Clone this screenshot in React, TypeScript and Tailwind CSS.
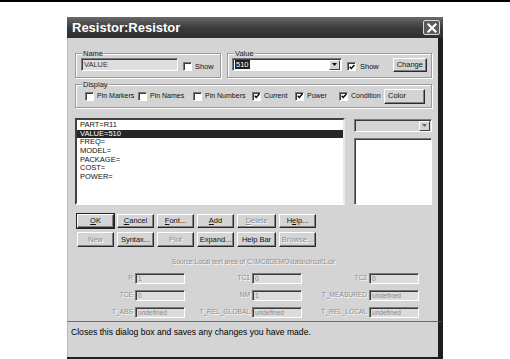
import { ReactNode } from "react";
import clsx from "clsx";

const LIST = ["PART=R11", "VALUE=510", "FREQ=", "MODEL=", "PACKAGE=", "COST=", "POWER="];

const FIELDS: [string, string][][] = [
  [["R", "1"], ["TC1", "0"], ["TC2", "0"]],
  [["TCE", "0"], ["NM", "1"], ["T_MEASURED", "undefined"]],
  [["T_ABS", "undefined"], ["T_REL_GLOBAL", "undefined"], ["T_REL_LOCAL", "undefined"]],
];

function Check({ on }: { on?: boolean }) {
  return (
    <span className="w-[9px] h-[9px] shrink-0 bg-white border border-t-[#7a7a7a] border-l-[#7a7a7a] border-b-white border-r-white shadow-[inset_1px_1px_0_#3a3a3a] flex items-center justify-center">
      {on && (
        <svg width="6" height="6" viewBox="0 0 7 7">
          <path d="M0.8 3.2 L2.6 5.2 L6.3 1.2" stroke="#000" strokeWidth="1.6" fill="none" />
        </svg>
      )}
    </span>
  );
}

function Btn({ children, className, disabled, def }: { children: ReactNode; className?: string; disabled?: boolean; def?: boolean }) {
  return (
    <div
      className={clsx(
        "flex items-center justify-center bg-[#d4d4d4] border border-t-white border-l-white border-r-[#2a2a2a] border-b-[#2a2a2a] shadow-[inset_-1px_-1px_0_#808080] text-[7.5px] leading-none",
        disabled ? "text-[#8c8c8c] [text-shadow:1px_1px_0_#fff]" : "text-[#111]",
        def && "outline outline-1 outline-[#222]",
        className
      )}
    >
      {children}
    </div>
  );
}

function Group({ label, className, children }: { label: string; className?: string; children: ReactNode }) {
  return (
    <div className={clsx("relative border border-[#9a9a9a] shadow-[inset_1px_1px_0_#fff,1px_1px_0_#fff]", className)}>
      <span className="absolute -top-[5px] left-[6px] px-px bg-[#d4d4d4] text-[7.5px] leading-[9px] text-[#222]">{label}</span>
      {children}
    </div>
  );
}

const sunken = "border border-t-[#7a7a7a] border-l-[#7a7a7a] border-b-white border-r-white shadow-[inset_1px_1px_0_#3a3a3a]";

export default function App() {
  return (
    <div className="w-[510px] h-[359px] bg-white overflow-hidden font-['Liberation_Sans',Arial,sans-serif]">
      <div className="h-[2px] bg-black" />
      <div className="ml-[67px] mt-[15px] w-[376px] h-[342px] flex flex-col border-b-2 border-[#1e1e1e]">
        {/* title bar */}
        <div className="h-[21px] shrink-0 flex items-center justify-between pl-[5px] pr-[3px] bg-gradient-to-b from-[#6a6a6a] via-[#3c3c3c] to-[#2e2e2e]">
          <span className="text-white font-bold text-[13px] leading-none">Resistor:Resistor</span>
          <div className="w-[17px] h-[15px] rounded-[2px] border border-[#d8d8d8] bg-[#5a5a5a] flex items-center justify-center">
            <svg width="10" height="10" viewBox="0 0 10 10">
              <path d="M1.5 1.5 L8.5 8.5 M8.5 1.5 L1.5 8.5" stroke="#fff" strokeWidth="2.2" strokeLinecap="square" />
            </svg>
          </div>
        </div>

        {/* body */}
        <div className="h-[283px] shrink-0 bg-[#d4d4d4] border-l border-l-[#b8b8b8] border-r-[5px] border-r-[#1e1e1e] pl-[7px] pr-[6px] pt-[15px] flex flex-col text-[#111]">
          <div className="flex gap-[6px] h-[25px]">
            <Group label="Name" className="w-[146px] flex items-start pt-[4px] pl-[5px]">
              <div className={clsx("w-[97px] h-[13px] bg-[#dedede] flex items-center pl-[2px] text-[7.5px] text-[#333]", sunken)}>VALUE</div>
              <div className="ml-[5px] mt-[3px] flex items-center gap-[3px] text-[7.5px]">
                <Check />
                <span>Show</span>
              </div>
            </Group>
            <Group label="Value" className="flex-1 flex items-start pt-[4px] pl-[4px]">
              <div className={clsx("w-[110px] h-[13px] bg-white flex items-center pl-[2px] pr-px", sunken)}>
                <span className="bg-[#222] text-white text-[7.5px] leading-[9px] px-px">510</span>
                <div className="ml-auto w-[11px] h-[10px] bg-[#d4d4d4] border border-t-white border-l-white border-r-[#404040] border-b-[#404040] flex items-center justify-center">
                  <svg width="5" height="3" viewBox="0 0 5 3"><path d="M0 0 H5 L2.5 3 Z" fill="#111" /></svg>
                </div>
              </div>
              <div className="ml-[5px] mt-[3px] flex items-center gap-[4px] text-[7.5px]">
                <Check on />
                <span>Show</span>
              </div>
              <Btn className="ml-[14px] w-[34px] h-[14px]">Change</Btn>
            </Group>
          </div>

          <Group label="Display" className="mt-[6px] h-[24px] flex items-center pl-[9px] text-[7px]">
            <div className="w-[53px] flex items-center gap-[3px]"><Check /><span>Pin Markers</span></div>
            <div className="w-[55px] flex items-center gap-[3px]"><Check /><span>Pin Names</span></div>
            <div className="w-[59px] flex items-center gap-[3px]"><Check /><span>Pin Numbers</span></div>
            <div className="w-[43px] flex items-center gap-[3px]"><Check on /><span>Current</span></div>
            <div className="w-[44px] flex items-center gap-[3px]"><Check on /><span>Power</span></div>
            <div className="w-[45px] flex items-center gap-[3px]"><Check on /><span>Condition</span></div>
            <Btn className="w-[41px] h-[15px] !justify-start pl-[3px]">Color</Btn>
          </Group>

          <div className="mt-[10px] flex gap-[9px] h-[87px]">
            <div className="w-[270px] bg-white border-2 border-t-[#404040] border-l-[#404040] border-b-white border-r-[#e8e8e8] text-[7.5px] leading-[8.7px] pt-px">
              {LIST.map((l, i) => (
                <div key={l} className={clsx("pl-[3px] h-[8.7px]", i === 1 && "bg-[#262626] text-white")}>{l}</div>
              ))}
            </div>
            <div className="flex-1 flex flex-col gap-[6px] pt-px">
              <div className={clsx("h-[13px] bg-[#d4d4d4] flex justify-end items-center pr-px", sunken)}>
                <div className="w-[11px] h-[10px] border border-t-white border-l-white border-r-[#404040] border-b-[#404040] flex items-center justify-center">
                  <svg width="5" height="3" viewBox="0 0 5 3"><path d="M0 0 H5 L2.5 3 Z" fill="#666" /></svg>
                </div>
              </div>
              <div className={clsx("flex-1 bg-white", sunken)} />
            </div>
          </div>

          <div className="mt-[9px] ml-[2px] flex flex-col gap-[4px]">
            <div className="flex gap-[3px] h-[14px]">
              <Btn className="w-[37px]" def><u>O</u>K</Btn>
              <Btn className="w-[37px]"><u>C</u>ancel</Btn>
              <Btn className="w-[37px]"><u>F</u>ont...</Btn>
              <Btn className="w-[37px]"><u>A</u>dd</Btn>
              <Btn className="w-[39px]" disabled><u>D</u>elete</Btn>
              <Btn className="w-[37px]">H<u>e</u>lp...</Btn>
            </div>
            <div className="flex gap-[3px] h-[15px]">
              <Btn className="w-[37px]" disabled>New</Btn>
              <Btn className="w-[37px]">Syntax...</Btn>
              <Btn className="w-[37px]" disabled>Plot</Btn>
              <Btn className="w-[37px]">Expand...</Btn>
              <Btn className="w-[39px]">Help Bar</Btn>
              <Btn className="w-[37px]" disabled>Browse...</Btn>
            </div>
          </div>

          <div className="mt-[11px] h-[8px] text-center text-[6.6px] leading-[8px] text-[#8c8c8c] [text-shadow:1px_1px_0_#fff]">
            Source:Local text area of C:\MC8DEMO\data\circuit1.cir
          </div>

          <div className="mt-[7px] flex flex-col gap-[6px]">
            {FIELDS.map((row, r) => (
              <div key={r} className="flex gap-[7px] h-[11px]">
                {row.map(([lab, val]) => (
                  <div key={lab} className="flex items-center gap-[2px]">
                    <span className="w-[58px] text-right text-[6.6px] leading-none text-[#8c8c8c] [text-shadow:1px_1px_0_#fff]">{lab}</span>
                    <div className={clsx("w-[50px] h-[11px] bg-[#dcdcdc] flex items-center pl-[2px] text-[6.6px] text-[#8a8a8a]", sunken)}>{val}</div>
                  </div>
                ))}
              </div>
            ))}
          </div>
        </div>

        {/* status bar */}
        <div className="flex-1 bg-[#d4d4d4] border-t border-t-[#6a6a6a] border-l border-l-[#b8b8b8] border-r-[5px] border-r-[#1e1e1e] pl-[3px] pt-[5px] text-[8.6px] leading-[11px] text-black">
          Closes this dialog box and saves any changes you have made.
        </div>
      </div>
    </div>
  );
}
